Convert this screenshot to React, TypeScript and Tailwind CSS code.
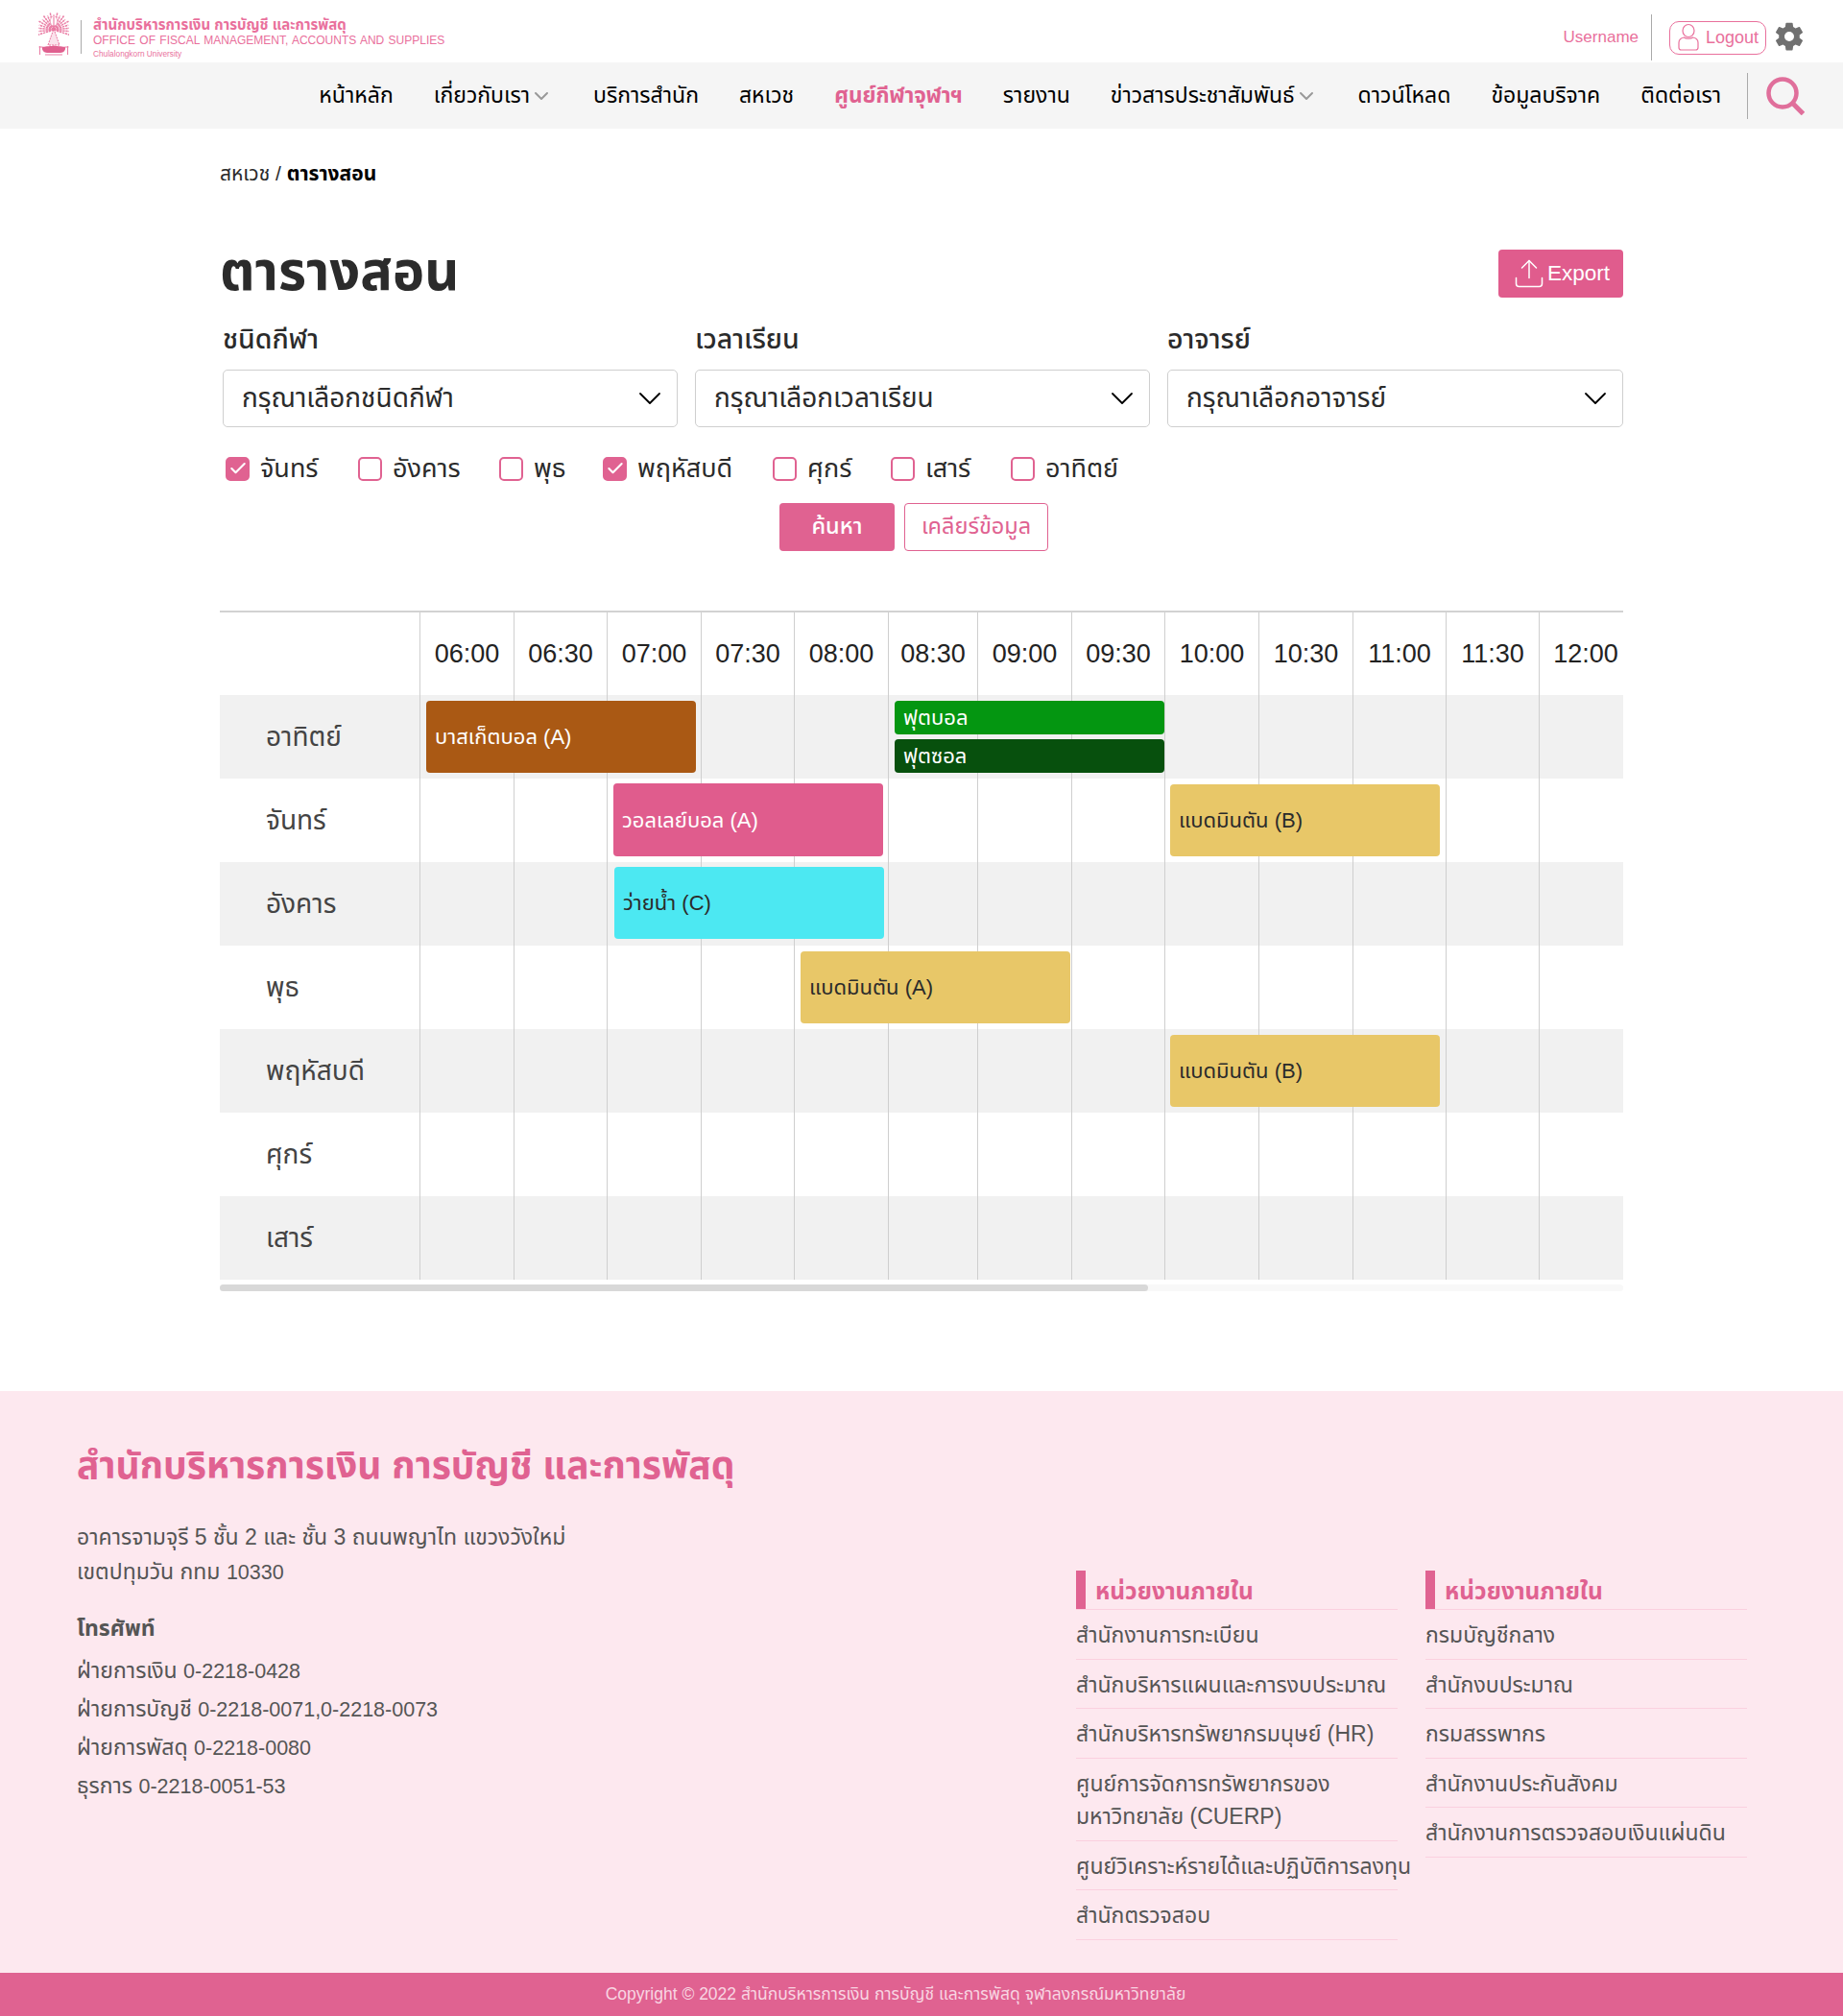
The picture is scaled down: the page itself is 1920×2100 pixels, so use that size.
import { ChevronDown, Upload, Check } from "lucide-react";
import { IoSettingsSharp } from "react-icons/io5";

const navItems = [
  { label: "หน้าหลัก" },
  { label: "เกี่ยวกับเรา", caret: true },
  { label: "บริการสำนัก" },
  { label: "สหเวช" },
  { label: "ศูนย์กีฬาจุฬาฯ", active: true },
  { label: "รายงาน" },
  { label: "ข่าวสารประชาสัมพันธ์", caret: true },
  { label: "ดาวน์โหลด" },
  { label: "ข้อมูลบริจาค" },
  { label: "ติดต่อเรา" },
];

const days = [
  { label: "จันทร์", checked: true, w: "w-[138px]" },
  { label: "อังคาร", w: "w-[147px]" },
  { label: "พุธ", w: "w-[108px]" },
  { label: "พฤหัสบดี", checked: true, w: "w-[177px]" },
  { label: "ศุกร์", w: "w-[123px]" },
  { label: "เสาร์", w: "w-[125px]" },
  { label: "อาทิตย์", w: "w-[140px]" },
];

const times = ["06:00", "06:30", "07:00", "07:30", "08:00", "08:30", "09:00", "09:30", "10:00", "10:30", "11:00", "11:30", "12:00"];

const rows = [
  {
    day: "อาทิตย์",
    events: [
      { label: "บาสเก็ตบอล (A)", cls: "left-[215px] top-[6px] h-[75px] bg-[#aa5914] text-white" },
      { label: "ฟุตบอล", cls: "left-[703px] top-[6px] h-[35px] bg-[#049611] text-white" },
      { label: "ฟุตซอล", cls: "left-[703px] top-[46px] h-[35px] bg-[#07500d] text-white" },
    ],
  },
  {
    day: "จันทร์",
    events: [
      { label: "วอลเลย์บอล (A)", cls: "left-[410px] top-[5px] h-[76px] bg-[#e05c8d] text-white" },
      { label: "แบดมินตัน (B)", cls: "left-[990px] top-[6px] h-[75px] bg-[#e8c768] text-[#2b2b2b]" },
    ],
  },
  { day: "อังคาร", events: [{ label: "ว่ายน้ำ (C)", cls: "left-[411px] top-[5px] h-[75px] bg-[#4ce8f2] text-[#2b2b2b]" }] },
  { day: "พุธ", events: [{ label: "แบดมินตัน (A)", cls: "left-[605px] top-[6px] h-[75px] bg-[#e8c768] text-[#2b2b2b]" }] },
  { day: "พฤหัสบดี", events: [{ label: "แบดมินตัน (B)", cls: "left-[990px] top-[6px] h-[75px] bg-[#e8c768] text-[#2b2b2b]" }] },
  { day: "ศุกร์", events: [] },
  { day: "เสาร์", events: [] },
];

const gridCols = "grid-cols-[208px_98px_97px_98px_97px_98px_93px_98px_97px_98px_98px_97px_97px_97px]";

const phones = [
  ["ฝ่ายการเงิน", "0-2218-0428"],
  ["ฝ่ายการบัญชี", "0-2218-0071,0-2218-0073"],
  ["ฝ่ายการพัสดุ", "0-2218-0080"],
  ["ธุรการ", "0-2218-0051-53"],
];

const linksLeft = [
  "สำนักงานการทะเบียน",
  "สำนักบริหารแผนและการงบประมาณ",
  "สำนักบริหารทรัพยากรมนุษย์ (HR)",
  "ศูนย์การจัดการทรัพยากรของ มหาวิทยาลัย (CUERP)",
  "ศูนย์วิเคราะห์รายได้และปฏิบัติการลงทุน",
  "สำนักตรวจสอบ",
];
const linksRight = ["กรมบัญชีกลาง", "สำนักงบประมาณ", "กรมสรรพากร", "สำนักงานประกันสังคม", "สำนักงานการตรวจสอบเงินแผ่นดิน"];

function Emblem() {
  const rays = Array.from({ length: 19 }, (_, i) => -108 + i * 12);
  return (
    <svg viewBox="0 0 32 46" className="h-[46px] w-[32px]" fill="none">
      {rays.map((a, i) => (
        <path key={a} d={i % 2 ? "M16 19V3" : "M16 19V1"} stroke="#ea7fa6" strokeWidth="1.5" strokeDasharray="2.4 .7" transform={`rotate(${a} 16 19)`} />
      ))}
      <ellipse cx="16" cy="10" rx="3.6" ry="5" fill="#fff" stroke="#ef9dbb" strokeWidth=".8" />
      <path d="M16 6v30" stroke="#e9709c" strokeWidth="1" />
      <path d="M10 35l6-17 6 17z" fill="#fbe3ec" stroke="#e9709c" strokeWidth="1" strokeDasharray="2 1" />
      <path d="M4 37c4-1.500 20-1.500 24 0 .8 3-2 6-5 6H9c-3 0-5.800-3-5-6z" fill="#e0608f" />
      <path d="M1.500 36v9M30.500 36v9M.5 37h4M27.500 37h4M7 45h18" stroke="#ea7fa6" strokeWidth="1.100" />
    </svg>
  );
}

function UserIcon() {
  return (
    <svg viewBox="0 0 24 32" className="h-[32px] w-[24px]" fill="none" stroke="currentColor" strokeWidth="1.200">
      <ellipse cx="12" cy="9" rx="6" ry="6.500" />
      <path d="M4.500 29h15c1.500 0 2.500-1 2.500-2.500v-5c0-3-2.500-5-5.500-5.500-1.500 1.500-7.500 1.500-9 0C4.500 16.500 2 18.500 2 21.500v5C2 28 3 29 4.500 29z" />
    </svg>
  );
}

function SearchIcon() {
  return (
    <svg viewBox="0 0 40 40" className="ml-[19px] h-[40px] w-[40px]" fill="none" stroke="#e06f9b">
      <circle cx="17" cy="17" r="14.500" strokeWidth="4.500" />
      <path d="M27 27l11.500 11.500" strokeWidth="5" />
    </svg>
  );
}

function Select({ text }: { text: string }) {
  return (
    <div className="flex h-[60px] items-center justify-between rounded-[5px] border border-[#cfcfcf] pl-[19px] pr-[8px] text-[28px] text-[#2b2b2b]">
      <span>{text}</span>
      <ChevronDown className="h-[40px] w-[40px] text-black" strokeWidth={1.1} />
    </div>
  );
}

function LinkList({ items }: { items: string[] }) {
  return (
    <div className="w-[335px]">
      <div className="flex h-[41px] items-end border-b border-[#fbd0df]">
        <div className="h-[40px] w-[10px] bg-[#e06291]" />
        <div className="ml-[10px] text-[24.500px] leading-[36px] font-bold text-[#e06291]">หน่วยงานภายใน</div>
      </div>
      {items.map((l) => (
        <div key={l} className="border-b border-[#fbd0df] pt-[9px] pb-[7px] text-[23px] leading-[34.500px] text-[#555]">
          <span className={l.startsWith("ศูนย์วิเคราะห์") ? "whitespace-nowrap" : ""}>{l}</span>
        </div>
      ))}
    </div>
  );
}

export default function App() {
  return (
    <div className="h-[2100px] w-[1920px] overflow-hidden bg-white font-['Liberation_Sans','Noto_Sans_Thai','Noto_Sans',sans-serif] text-[#2b2b2b]">
      {/* Top bar */}
      <header className="flex h-[65px] justify-between px-[40px]">
        <div className="flex items-center pt-[14px]">
          <div className="-mt-[10px]">
            <Emblem />
          </div>
          <div className="mx-[12px] -mt-[2px] h-[35px] w-px bg-[#aaa]" />
          <div className="text-[#e9709c]">
            <div className="text-[15px] leading-[18px] font-bold">สำนักบริหารการเงิน การบัญชี และการพัสดุ</div>
            <div className="text-[12px] leading-[15px] [word-spacing:1px]">OFFICE OF FISCAL MANAGEMENT, ACCOUNTS AND SUPPLIES</div>
            <div className="text-[8.300px] leading-[12px]">Chulalongkorn University</div>
          </div>
        </div>
        <div className="flex items-center self-end pb-[2px]">
          <span className="text-[17px] text-[#e9709c]">Username</span>
          <div className="mx-[13px] h-[48px] w-px bg-[#aaa]" />
          <button className="ml-[5px] flex h-[35px] w-[101px] items-center justify-center gap-[6px] rounded-[10px] border border-[#e9709c] text-[18px] text-[#e9709c]">
            <UserIcon />
            Logout
          </button>
          <IoSettingsSharp className="ml-[8px] mb-[3px] h-[32px] w-[32px] text-[#707070]" />
        </div>
      </header>

      {/* Main nav */}
      <nav className="flex h-[69px] items-center justify-end gap-[42px] bg-[#f5f5f5] pr-[40px]">
        {navItems.map((n) => (
          <div key={n.label} className={`flex items-center ${n.active ? "text-[22.500px] font-bold text-[#e06291]" : "text-[23px] text-black"}`}>
            {n.label}
            {n.caret && <ChevronDown className="h-[26px] w-[24px] text-[#999]" strokeWidth={2} />}
          </div>
        ))}
        <div className="-ml-[15px] flex items-center">
          <div className="h-[48px] w-px bg-[#aaa]" />
          <SearchIcon />
        </div>
      </nav>

      {/* Content */}
      <main className="mx-auto w-[1462px] pt-[32px]">
        <div className="text-[21px] leading-[30px]">
          สหเวช / <span className="font-bold text-black">ตารางสอน</span>
        </div>
        <div className="mt-[49px] flex h-[80px] items-center justify-between">
          <h1 className="mb-[4px] text-[56px] font-bold text-[#2b2b2b]">ตารางสอน</h1>
          <button className="flex h-[50px] w-[130px] items-center justify-center gap-px rounded-[4px] bg-[#e05c8d] text-[22.500px] text-white">
            <Upload className="h-[36px] w-[36px]" strokeWidth={1} />
            Export
          </button>
        </div>

        <div className="mt-[8px] ml-[3px] grid grid-cols-[474px_474px_475px] gap-x-[18px]">
          {[
            ["ชนิดกีฬา", "กรุณาเลือกชนิดกีฬา"],
            ["เวลาเรียน", "กรุณาเลือกเวลาเรียน"],
            ["อาจารย์", "กรุณาเลือกอาจารย์"],
          ].map(([label, placeholder]) => (
            <div key={label}>
              <div className="mb-[12px] text-[28.500px] leading-[40px] font-medium">{label}</div>
              <Select text={placeholder} />
            </div>
          ))}
        </div>

        <div className="mt-[20px] ml-[6px] flex h-[46px] items-center">
          {days.map((d) => (
            <label key={d.label} className={`flex items-center gap-[11px] text-[27px] ${d.w}`}>
              <span className={`grid h-[25px] w-[25px] place-items-center rounded-[5px] border-2 border-[#e06291] ${d.checked ? "bg-[#e06291]" : "bg-white"}`}>
                {d.checked && <Check className="h-[20px] w-[20px] text-white" strokeWidth={2.5} />}
              </span>
              {d.label}
            </label>
          ))}
        </div>

        <div className="mt-[13px] flex justify-center gap-[10px] pr-[16px]">
          <button className="h-[50px] w-[120px] rounded-[4px] bg-[#e06291] text-[23.500px] font-medium text-white">ค้นหา</button>
          <button className="h-[50px] w-[150px] rounded-[4px] border border-[#e06291] text-[23.500px] text-[#e06291]">เคลียร์ข้อมูล</button>
        </div>

        {/* Timetable */}
        <div className="mt-[62px] overflow-hidden border-t-2 border-[#d2d2d2]">
          <div className="w-[2210px]">
            <div className={`grid h-[86px] ${gridCols}`}>
              <div />
              {times.map((t) => (
                <div key={t} className="flex items-center justify-center border-l border-[#cfcfcf] text-[27px] text-[#222]">
                  {t}
                </div>
              ))}
            </div>
            {rows.map((r, i) => (
              <div key={r.day} className={`relative grid h-[87px] ${gridCols} ${i % 2 === 0 ? "bg-[#f1f1f1]" : "bg-white"}`}>
                <div className="flex items-center pl-[48px] text-[28px] text-[#444]">{r.day}</div>
                {times.map((t) => (
                  <div key={t} className="border-l border-[#cfcfcf]" />
                ))}
                {r.events.map((e) => (
                  <div key={e.label} className={`absolute flex w-[281px] items-center rounded-[4px] pl-[9px] text-[22px] ${e.cls}`}>
                    {e.label}
                  </div>
                ))}
              </div>
            ))}
          </div>
        </div>
        <div className="mt-[5px] h-[7px] rounded-full bg-[#f8f8f8]">
          <div className="h-[7px] w-[967px] rounded-full bg-[#d8d8d8]" />
        </div>
      </main>

      {/* Footer */}
      <footer className="mt-[104px] h-[606px] bg-[#fde8ef] pl-[80px] pr-[100px] pt-[48px]">
        <div className="flex">
          <div className="w-[1041px]">
            <div className="text-[39px] leading-[60px] font-bold text-[#e06291]">สำนักบริหารการเงิน การบัญชี และการพัสดุ</div>
            <div className="mt-[26px] text-[23px] leading-[36px] text-[#555]">
              <div>อาคารจามจุรี 5 ชั้น 2 และ ชั้น 3 ถนนพญาไท แขวงวังใหม่</div>
              <div>
                เขตปทุมวัน กทม <span className="text-[21.500px] leading-none">10330</span>
              </div>
            </div>
            <div className="mt-[21px] text-[23px] leading-[40px] font-bold text-[#555]">โทรศัพท์</div>
            <div className="mt-[4px] text-[23px] leading-[40px] text-[#555]">
              {phones.map(([name, num]) => (
                <div key={name}>
                  {name} <span className="text-[21.500px] leading-none">{num}</span>
                </div>
              ))}
            </div>
          </div>
          <div className="mt-[139px] flex gap-[29px]">
            <LinkList items={linksLeft} />
            <LinkList items={linksRight} />
          </div>
        </div>
      </footer>
      <div className="flex h-[45px] items-center justify-center bg-[#e06291] pr-[54px] text-[17.500px] text-[#f8d5e2]">
        Copyright © 2022 สำนักบริหารการเงิน การบัญชี และการพัสดุ จุฬาลงกรณ์มหาวิทยาลัย
      </div>
    </div>
  );
}
